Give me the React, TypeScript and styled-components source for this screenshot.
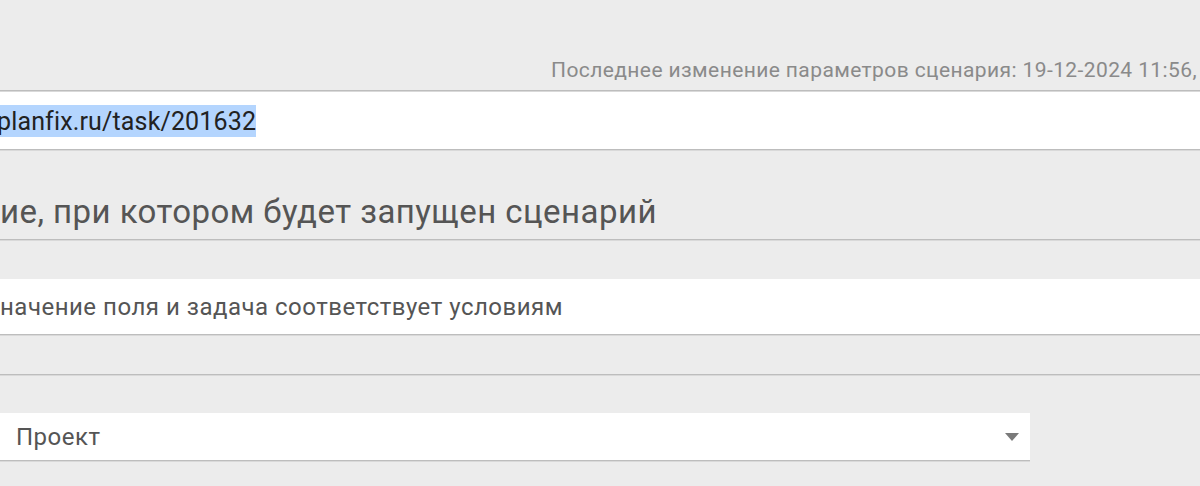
import styled, { createGlobalStyle } from "styled-components";

const GlobalStyle = createGlobalStyle`
  html, body {
    margin: 0;
    padding: 0;
    background: #ececec;
    overflow: hidden;
  }
  body {
    font-family: Roboto, "Noto Sans", "Liberation Sans", sans-serif;
    color: #555;
  }
`;

const Rule = `
  border-bottom: 1px solid #bdbdbd;
  box-shadow: 0 1px 0 #d9d9d9;
`;

const Page = styled.div`
  width: 1200px;
  height: 486px;
  display: flex;
  flex-direction: column;
`;

const MetaRow = styled.div`
  height: 91px;
  display: flex;
  align-items: flex-end;
  justify-content: flex-end;
  padding: 0 3px 8px 0;
  box-sizing: border-box;
  ${Rule}
`;

const MetaText = styled.span`
  font-size: 21px;
  letter-spacing: 0.4px;
  color: #8a8a8a;
  white-space: nowrap;
`;

const UrlField = styled.div`
  height: 57px;
  margin-top: 1px;
  background: #fff;
  display: flex;
  align-items: center;
  ${Rule}
`;

const Selected = styled.span`
  margin-left: -7px;
  padding: 2px 0 1px 4px;
  font-size: 25px;
  letter-spacing: 0.15px;
  color: #222;
  background: #b4d5fe;
  white-space: nowrap;
`;

const Heading = styled.h2`
  margin: 0;
  height: 90px;
  display: flex;
  align-items: flex-end;
  padding-bottom: 8px;
  box-sizing: border-box;
  font-size: 33px;
  letter-spacing: 0.45px;
  font-weight: 400;
  color: #555;
  white-space: nowrap;
  ${Rule}
`;

const Trigger = styled.div`
  margin-top: 39px;
  height: 55px;
  background: #fff;
  display: flex;
  align-items: center;
  font-size: 24px;
  letter-spacing: 0.5px;
  color: #555;
  white-space: nowrap;
  ${Rule}
`;

const Divider = styled.div`
  height: 39px;
  ${Rule}
`;

const SelectBox = styled.div`
  margin-top: 38px;
  width: 1030px;
  height: 48px;
  box-sizing: border-box;
  background: #fff;
  display: flex;
  align-items: center;
  justify-content: space-between;
  padding: 0 11px 0 16px;
  font-size: 24px;
  letter-spacing: 0.5px;
  color: #555;
  ${Rule}
`;

const Caret = () => (
  <svg width="14" height="8" viewBox="0 0 14 8">
    <path d="M0 0 H14 L7 8 Z" fill="#7a7a7a" />
  </svg>
);

export default function App() {
  return (
    <>
      <GlobalStyle />
      <Page>
        <MetaRow>
          <MetaText>
            Последнее изменение параметров сценария: 19-12-2024 11:56,
          </MetaText>
        </MetaRow>
        <UrlField>
          <Selected>planfix.ru/task/201632</Selected>
        </UrlField>
        <Heading>ие, при котором будет запущен сценарий</Heading>
        <Trigger>начение поля и задача соответствует условиям</Trigger>
        <Divider />
        <SelectBox>
          <span>Проект</span>
          <Caret />
        </SelectBox>
      </Page>
    </>
  );
}
